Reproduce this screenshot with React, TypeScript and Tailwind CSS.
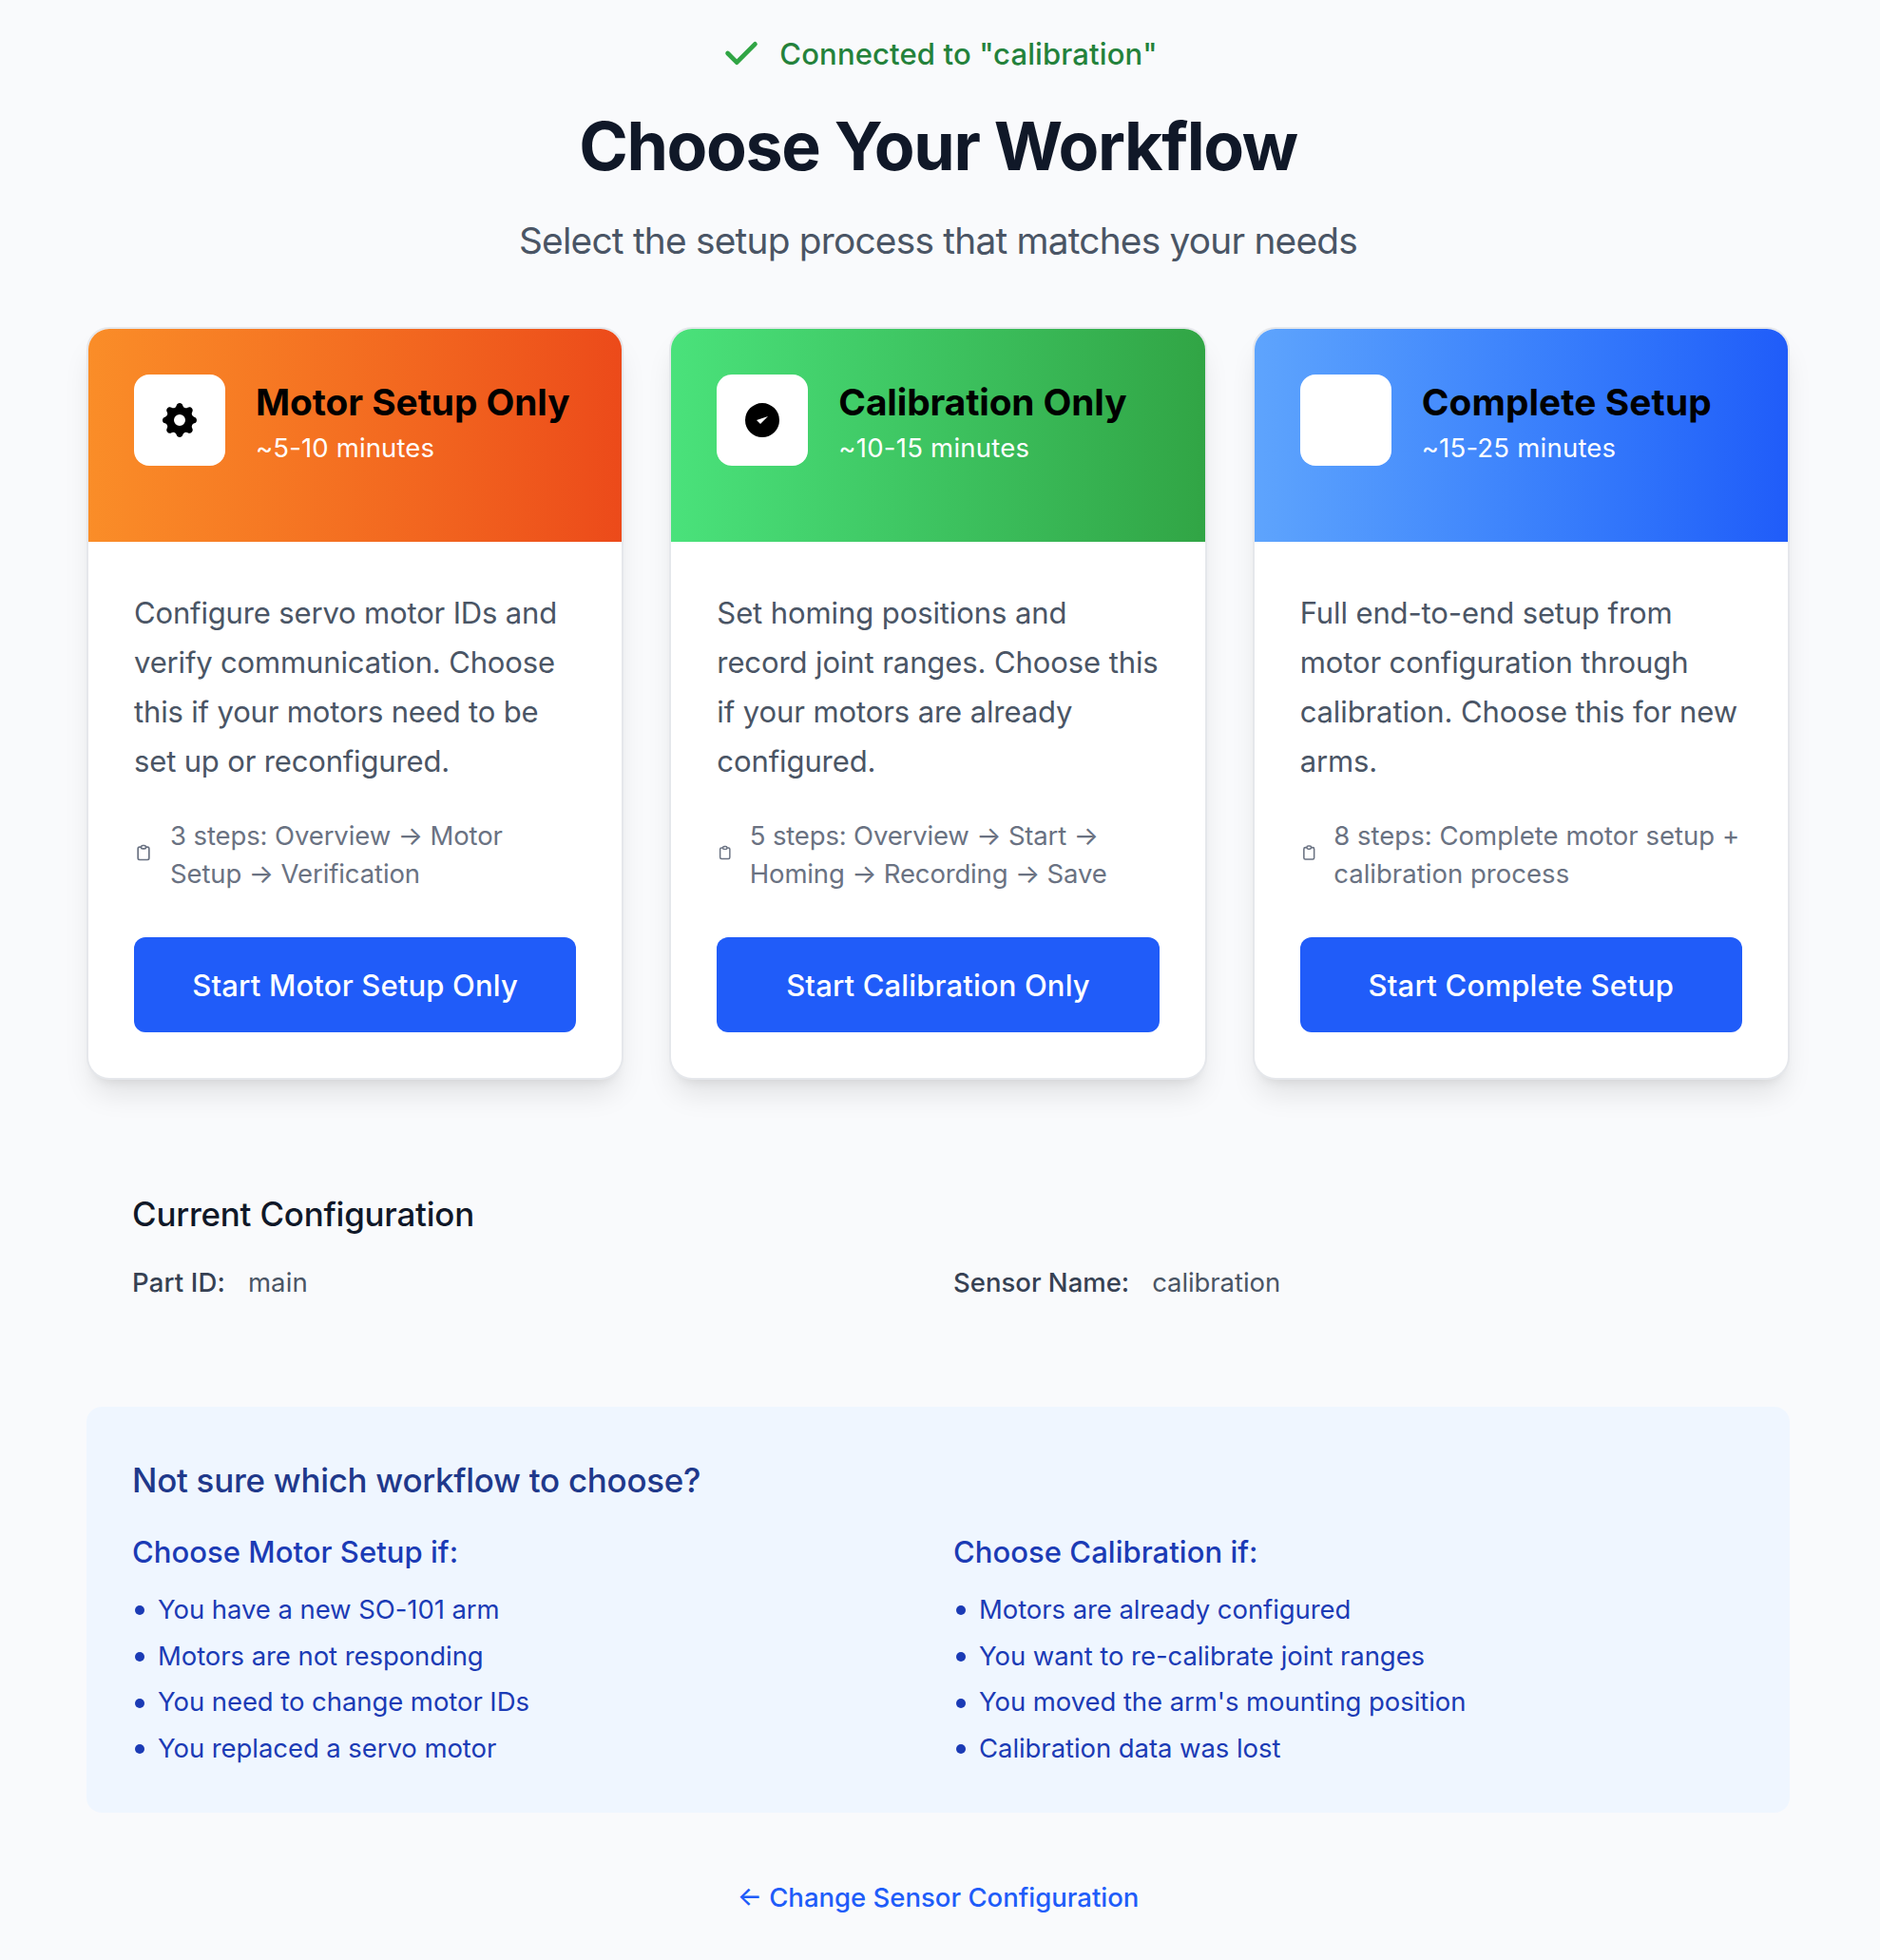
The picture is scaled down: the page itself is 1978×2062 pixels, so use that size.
import React from "react";

type Workflow = {
  title: string;
  titleClass: string;
  time: string;
  timeClass: string;
  description: string;
  descriptionClass: string;
  steps: string;
  stepsClass: string;
  clipboardClass: string;
  headerClass: string;
  button: string;
  buttonClass: string;
  icon: React.ReactNode;
};

const CogIcon = () => (
  <svg className="size-12" viewBox="0 0 24 24" fill="currentColor">
    <path
      fillRule="evenodd"
      d="M10.325 4.317c.426-1.756 2.924-1.756 3.35 0a1.724 1.724 0 002.573 1.066c1.543-.94 3.31.826 2.37 2.37a1.724 1.724 0 001.065 2.572c1.756.426 1.756 2.924 0 3.35a1.724 1.724 0 00-1.066 2.573c.94 1.543-.826 3.31-2.37 2.37a1.724 1.724 0 00-2.572 1.065c-.426 1.756-2.924 1.756-3.35 0a1.724 1.724 0 00-2.573-1.066c-1.543.94-3.31-.826-2.37-2.37a1.724 1.724 0 00-1.065-2.572c-1.756-.426-1.756-2.924 0-3.35a1.724 1.724 0 001.066-2.573c-.94-1.543.826-3.31 2.37-2.37.996.608 2.296.07 2.572-1.065z M15 12a3 3 0 11-6 0 3 3 0 016 0z"
    />
  </svg>
);

const CheckCircleIcon = () => (
  <svg className="size-12" viewBox="0 0 24 24" fill="currentColor">
    <path d="M9 12l2 2 4-4m6 2a9 9 0 11-18 0 9 9 0 0118 0z" />
  </svg>
);

const ClipboardIcon = ({ className }: { className: string }) => (
  <svg className={className} viewBox="0 0 24 24" fill="none" stroke="currentColor" strokeWidth={2}>
    <path
      strokeLinecap="round"
      strokeLinejoin="round"
      d="M9 5H7a2 2 0 00-2 2v12a2 2 0 002 2h10a2 2 0 002-2V7a2 2 0 00-2-2h-2M9 5a2 2 0 002 2h2a2 2 0 002-2M9 5a2 2 0 012-2h2a2 2 0 012 2"
    />
  </svg>
);

const workflows: Workflow[] = [
  {
    title: "Motor Setup Only",
    titleClass: "tracking-[-0.0014em]",
    time: "~5-10 minutes",
    timeClass: "tracking-[0.005em]",
    description:
      "Configure servo motor IDs and verify communication. Choose this if your motors need to be set up or reconfigured.",
    descriptionClass: "tracking-[-0.0055em]",
    steps: "3 steps: Overview → Motor Setup → Verification",
    stepsClass: "tracking-[-0.004em]",
    clipboardClass: "mr-[18px] h-8 w-5 shrink-0 -translate-y-px",
    headerClass: "from-[#fa8d28] to-[#ec4a1a]",
    button: "Start Motor Setup Only",
    buttonClass: "tracking-[0.005em]",
    icon: <CogIcon />,
  },
  {
    title: "Calibration Only",
    titleClass: "tracking-[-0.0025em]",
    time: "~10-15 minutes",
    timeClass: "tracking-[0.009em]",
    description:
      "Set homing positions and record joint ranges. Choose this if your motors are already configured.",
    descriptionClass: "tracking-[-0.0035em]",
    steps: "5 steps: Overview → Start → Homing → Recording → Save",
    stepsClass: "tracking-[-0.006em]",
    clipboardClass: "mr-[17px] h-8 w-[17.5px] shrink-0 -translate-y-px",
    headerClass: "from-[#4ae27b] to-[#31a545]",
    button: "Start Calibration Only",
    buttonClass: "tracking-[0.004em]",
    icon: <CheckCircleIcon />,
  },
  {
    title: "Complete Setup",
    titleClass: "tracking-[0.003em]",
    time: "~15-25 minutes",
    timeClass: "tracking-[0.008em]",
    description:
      "Full end-to-end setup from motor configuration through calibration. Choose this for new arms.",
    descriptionClass: "tracking-[-0.004em]",
    steps: "8 steps: Complete motor setup + calibration process",
    stepsClass: "tracking-[0.001em]",
    clipboardClass: "mr-[17px] h-8 w-[18.5px] shrink-0 -translate-y-px",
    headerClass: "from-[#5ea4fd] to-[#205cf9]",
    button: "Start Complete Setup",
    buttonClass: "tracking-[0.007em]",
    icon: null,
  },
];

const guides = [
  {
    title: "Choose Motor Setup if:",
    items: [
      "You have a new SO-101 arm",
      "Motors are not responding",
      "You need to change motor IDs",
      "You replaced a servo motor",
    ],
  },
  {
    title: "Choose Calibration if:",
    items: [
      "Motors are already configured",
      "You want to re-calibrate joint ranges",
      "You moved the arm's mounting position",
      "Calibration data was lost",
    ],
  },
];

function WorkflowCard({ w }: { w: Workflow }) {
  return (
    <div className="flex flex-col overflow-hidden rounded-[24px] border-2 border-[#e5e7eb] bg-white shadow-[0_20px_30px_-6px_rgba(0,0,0,0.1),0_8px_12px_-8px_rgba(0,0,0,0.1)]">
      <div className={`h-56 bg-linear-to-r p-12 ${w.headerClass}`}>
        <div className="flex items-center">
          <div className="mr-8 flex size-24 shrink-0 items-center justify-center rounded-[16px] bg-white text-black">
            {w.icon}
          </div>
          <div className="translate-y-px whitespace-nowrap">
            <h3 className={`text-[38.8px]/[56px] font-bold text-black ${w.titleClass}`}>{w.title}</h3>
            <p className={`text-[27.5px]/[40px] text-white ${w.timeClass}`}>{w.time}</p>
          </div>
        </div>
      </div>
      <div className="p-12">
        <p className={`mb-8 h-52 translate-y-px text-[31.04px]/[52px] font-[420] text-[#4a5565] ${w.descriptionClass}`}>
          {w.description}
        </p>
        <div className="mb-12 flex items-center text-[#6a7282]">
          <ClipboardIcon className={w.clipboardClass} />
          <span className={`translate-y-px text-[27.5px]/[40px] font-[420] ${w.stepsClass}`}>{w.steps}</span>
        </div>
        <button className="block h-[100px] w-full rounded-[12px] bg-[#205cf9] text-center text-[31.04px]/[48px] font-[550] text-white">
          <span className={`block translate-y-px ${w.buttonClass}`}>{w.button}</span>
        </button>
      </div>
    </div>
  );
}

export default function App() {
  return (
    <div className="min-h-[2062px] bg-[#f9fafc] pr-1 font-[Inter,sans-serif]">
      <main className="mx-auto w-[1792px] pt-8">
        <header className="mb-16 text-center">
          <div className="mb-8 flex h-12 items-center justify-center">
            <svg className="mr-4 size-12 text-[#31a545]" viewBox="0 0 20 20" fill="currentColor">
              <path
                fillRule="evenodd"
                clipRule="evenodd"
                d="M16.707 5.293a1 1 0 010 1.414l-8 8a1 1 0 01-1.414 0l-4-4a1 1 0 011.414-1.414L8 12.586l7.293-7.293a1 1 0 011.414 0z"
              />
            </svg>
            <span className="translate-y-px text-[31.04px]/[48px] font-[550] tracking-[0.004em] text-[#24823b]">
              Connected to "calibration"
            </span>
          </div>
          <h1 className="mb-8 translate-y-0.5 text-[69.84px]/[80px] font-bold tracking-[-0.0192em] text-[#101828]">
            Choose Your Workflow
          </h1>
          <p className="translate-y-px text-[38.8px]/[56px] font-[420] tracking-[-0.0198em] text-[#4a5565]">
            Select the setup process that matches your needs
          </p>
        </header>

        <section className="mb-16 grid grid-cols-3 gap-12">
          {workflows.map((w) => (
            <WorkflowCard key={w.title} w={w} />
          ))}
        </section>

        <section className="mb-16 p-12">
          <h3 className="mb-6 translate-y-px text-[34.92px]/[56px] font-[550] tracking-[-0.006em] text-[#101828]">
            Current Configuration
          </h3>
          <div className="grid translate-y-px grid-cols-2 gap-8 text-[27.5px]/[40px] text-[#4a5565]">
            <div className="flex gap-6">
              <span className="font-[550] tracking-[0.006em] text-[#364153]">Part ID:</span>
              <span className="tracking-[0.003em]">main</span>
            </div>
            <div className="flex gap-6">
              <span className="font-[550] text-[#364153]">Sensor Name:</span>
              <span className="tracking-[-0.003em]">calibration</span>
            </div>
          </div>
        </section>

        <section className="mb-16 rounded-[16px] bg-[#eff6ff] p-12">
          <h3 className="mb-6 translate-y-px text-[34.92px]/[56px] font-[550] tracking-[-0.0075em] text-[#1f398b]">
            Not sure which workflow to choose?
          </h3>
          <div className="grid grid-cols-2 gap-8 text-[#1b3bb5]">
            {guides.map((g) => (
              <div key={g.title}>
                <h4 className="mb-4 translate-y-px text-[31.04px]/[48px] font-[550] tracking-[0.001em]">
                  {g.title}
                </h4>
                <ul className="flex translate-y-px flex-col gap-2 text-[27.5px]/[40.67px] font-[420] tracking-[-0.0025em]">
                  {g.items.map((item) => (
                    <li key={item} className="flex">
                      <span className="flex w-[27px] shrink-0 translate-y-px items-center pl-[3px]">
                        <span className="size-2.5 rounded-full bg-current" />
                      </span>
                      {item}
                    </li>
                  ))}
                </ul>
              </div>
            ))}
          </div>
        </section>

        <div className="flex justify-center">
          <a className="mt-1 translate-y-px text-[27.5px]/[40px] font-[550] text-[#205cf9]">
            ← Change Sensor Configuration
          </a>
        </div>
      </main>
    </div>
  );
}
